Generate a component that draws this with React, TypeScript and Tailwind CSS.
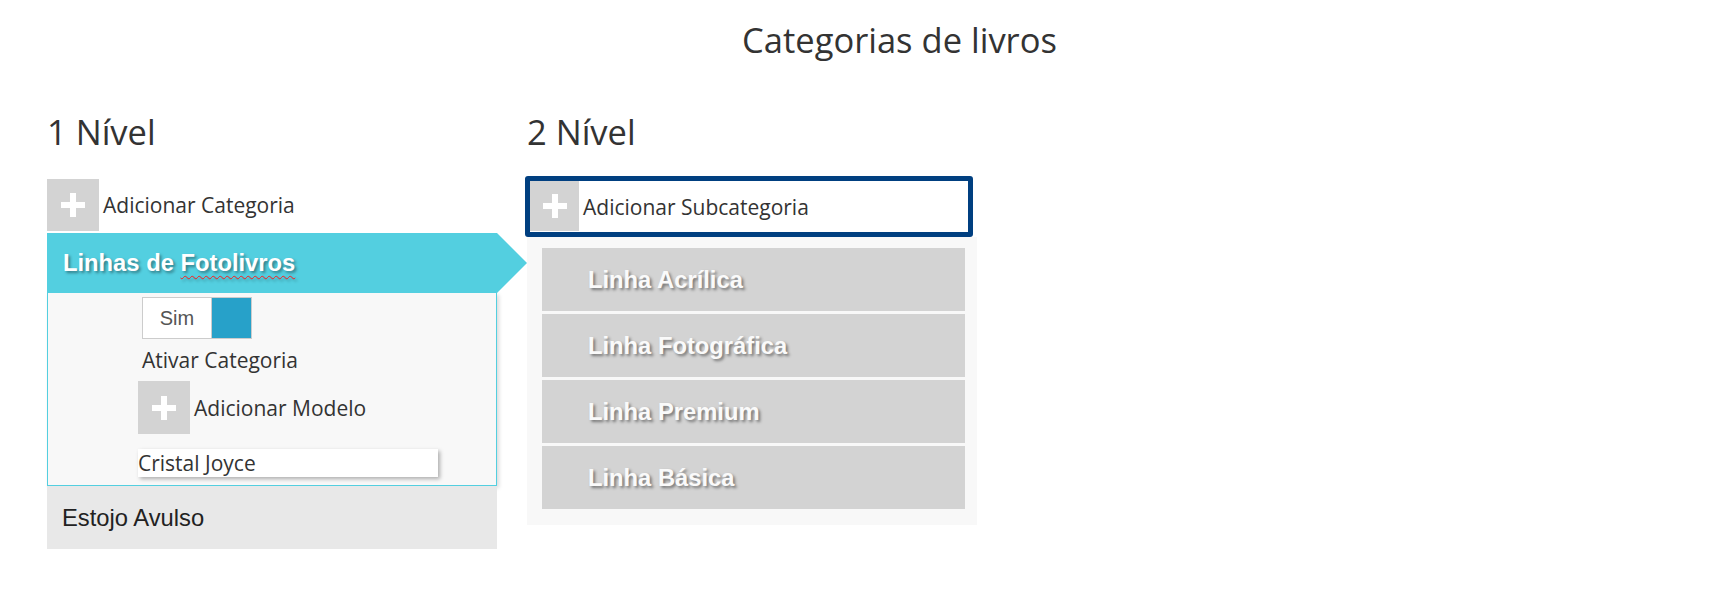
import React from "react";

const SUBCATEGORIAS = ["Linha Acrílica", "Linha Fotográfica", "Linha Premium", "Linha Básica"];

function PlusBox({ className = "" }: { className?: string }) {
  return (
    <div className={`relative flex shrink-0 items-center justify-center bg-[#d3d3d3] ${className}`}>
      <span className="absolute h-[6px] w-[24px] bg-white" />
      <span className="absolute h-[24px] w-[6px] bg-white" />
    </div>
  );
}

export default function App() {
  return (
    <div className="min-h-screen bg-white font-['Open_Sans',sans-serif] text-[#333]">
      <h1 className="pl-[67px] pt-[17px] text-center text-[34.5px] font-normal leading-[46px]">
        Categorias de livros
      </h1>

      <div className="mt-[46px] flex gap-[30px] pl-[47px]">
        {/* 1 nível */}
        <div className="flex w-[450px] flex-col">
          <h2 className="text-[34.5px] font-normal leading-[46px]">1 Nível</h2>

          <div className="mt-[24px] flex h-[52px] items-center">
            <PlusBox className="h-[52px] w-[52px]" />
            <span className="ml-[4px] text-[21px] leading-[28px]">Adicionar Categoria</span>
          </div>

          <div className="relative mt-[2px] flex h-[60px] items-center bg-[#53cfe0] pl-[16px]">
            <span className="font-['Liberation_Sans',Arial,sans-serif] text-[23.75px] font-bold text-white [text-shadow:2px_2px_3px_rgba(0,0,0,0.4)]">
              Linhas de{" "}
              <span className="underline decoration-[#ff1a1a] decoration-wavy decoration-1 underline-offset-[4px]">
                Fotolivros
              </span>
            </span>
            <span className="absolute left-full top-0 h-0 w-0 border-y-[30px] border-l-[30px] border-y-transparent border-l-[#53cfe0]" />
          </div>

          <div className="flex flex-col border-x border-b border-[#53cfe0] bg-[#f8f8f8] pb-[8px] pl-[90px] pt-[4px] shadow-[2px_2px_4px_rgba(0,0,0,0.15)]">
            <div className="ml-[4px] flex h-[42px] w-[110px] border border-[#ccc]">
              <div className="flex w-[68px] items-center justify-center bg-white font-['Liberation_Sans',Arial,sans-serif] text-[20px] text-[#555]">
                Sim
              </div>
              <div className="flex-1 border-l border-[#ccc] bg-[#27a1c9]" />
            </div>
            <span className="ml-[4px] mt-[7px] text-[21px] leading-[28px]">Ativar Categoria</span>
            <div className="mt-[7px] flex items-center">
              <PlusBox className="h-[53px] w-[52px]" />
              <span className="ml-[4px] text-[21px] leading-[28px]">Adicionar Modelo</span>
            </div>
            <input
              defaultValue="Cristal Joyce"
              className="mt-[15px] h-[28px] w-[300px] bg-white p-0 text-[21px] leading-[28px] text-[#333] shadow-[2px_2px_4px_rgba(0,0,0,0.3)] outline-none"
            />
          </div>

          <div className="flex h-[63px] items-center bg-[#e8e8e8] pl-[15px] font-['Liberation_Sans',Arial,sans-serif] text-[23.75px] text-[#222]">
            Estojo Avulso
          </div>
        </div>

        {/* 2 nível */}
        <div className="flex w-[450px] flex-col">
          <h2 className="text-[34.5px] font-normal leading-[46px]">2 Nível</h2>

          <div className="-ml-[2px] mt-[21px] flex h-[61px] w-[448px] items-start rounded-[3px] border-[5px] border-[#003f80] bg-white">
            <PlusBox className="h-[50px] w-[49px]" />
            <span className="ml-[4px] self-center text-[21px] leading-[28px]">Adicionar Subcategoria</span>
          </div>

          <div className="flex flex-col gap-[3px] bg-[#f8f8f8] pb-[16px] pl-[15px] pr-[12px] pt-[11px]">
            {SUBCATEGORIAS.map((nome) => (
              <div
                key={nome}
                className="flex h-[63px] items-center bg-[#d3d3d3] pl-[46px] font-['Liberation_Sans',Arial,sans-serif] text-[23.75px] font-bold text-[#fafafa] [text-shadow:2px_2px_3px_rgba(0,0,0,0.45)]"
              >
                {nome}
              </div>
            ))}
          </div>
        </div>
      </div>
    </div>
  );
}
